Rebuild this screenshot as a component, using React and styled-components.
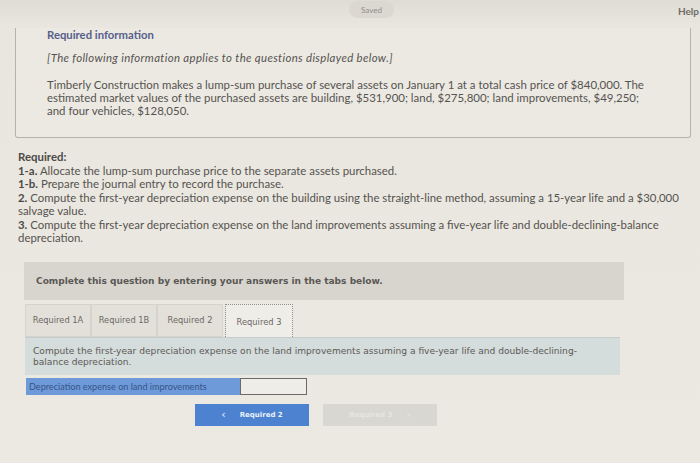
import React from 'react';
import styled, { createGlobalStyle } from 'styled-components';

const Global = createGlobalStyle`
  html, body { margin: 0; padding: 0; }
  body {
    background: #ebe8e1;
    font-family: Lato, "Open Sans", sans-serif;
    color: #4a4845;
    width: 700px;
    height: 463px;
    overflow: hidden;
  }
`;

const Page = styled.div`
  width: 700px;
  height: 463px;
  background: linear-gradient(#dfdcd5 0, #e9e6df 26px, #ece9e3 100%);
`;

const TopBar = styled.div`
  height: 28px;
  display: flex;
  justify-content: center;
  align-items: flex-start;
  position: relative;
`;

const SavedPill = styled.span`
  margin-left: 43px;
  margin-top: 1px;
  width: 45px;
  height: 17px;
  border-radius: 9px;
  background: #dbd8d1;
  color: #8f8d88;
  font-size: 8px;
  display: flex;
  align-items: center;
  justify-content: center;
`;

const Help = styled.span`
  position: absolute;
  right: 1px;
  top: 5px;
  font-size: 10px;
  font-weight: 700;
  color: #6e6c68;
`;

const InfoBox = styled.div`
  margin: 0 9px 0 15px;
  height: 110px;
  box-sizing: border-box;
  border: 1px solid #b5b2ac;
  border-top: none;
  border-radius: 0 0 3px 3px;
  padding: 0 0 0 31px;
  background: #ece9e3;
`;

const InfoTitle = styled.div`
  font-size: 11.3px;
  line-height: 14px;
  font-weight: 700;
  color: #56608a;
`;

const InfoNote = styled.div`
  margin-top: 9px;
  font-size: 11.4px;
  line-height: 14px;
  letter-spacing: 0.35px;
  font-style: italic;
  color: #55534f;
`;

const InfoText = styled.p`
  margin: 13px 0 0;
  font-size: 11.45px;
  line-height: 13px;
  white-space: nowrap;
  color: #55534f;
`;

const Required = styled.div`
  margin: 12px 0 0 18px;
  font-size: 11.4px;
  line-height: 13.5px;
  white-space: nowrap;
  color: #55534f;
  b { color: #4b4a47; }
`;

const Assignment = styled.div`
  margin: 17px 0 0 24px;
  width: 600px;
`;

const Banner = styled.div`
  height: 38px;
  background: #d8d5ce;
  display: flex;
  align-items: center;
  padding-left: 12px;
  font-family: "DejaVu Sans", sans-serif;
  font-size: 9.05px;
  font-weight: 700;
  color: #5a5855;
`;

const Tabs = styled.div`
  display: flex;
  margin: 4px 0 0 1px;
  height: 33px;
  align-items: flex-end;
`;

const Tab = styled.div`
  width: ${p => (p.$active ? '68px' : '66px')};
  height: 33px;
  box-sizing: border-box;
  display: flex;
  align-items: center;
  justify-content: center;
  font-family: "DejaVu Sans", sans-serif;
  font-size: 8.3px;
  color: #6a6864;
  background: ${p => (p.$active ? '#efede8' : '#e3e0d9')};
  border: ${p => (p.$active ? '1px dotted #8f8d89' : '1px solid #d6d3cc')};
  border-bottom: ${p => (p.$active ? 'none' : '1px solid #d6d3cc')};
  margin-left: ${p => (p.$active ? '2px' : '0')};
  padding-top: ${p => (p.$active ? '3px' : '0')};
`;

const Prompt = styled.div`
  height: 38px;
  width: 595px;
  margin-left: 1px;
  box-sizing: border-box;
  background: #d4dcdc;
  border-top: 1px solid #c4cdce;
  padding: 8px 0 0 8px;
  font-family: "DejaVu Sans", sans-serif;
  font-size: 9.1px;
  line-height: 11.5px;
  color: #5c5a56;
`;

const AnswerRow = styled.div`
  display: flex;
  margin: 3px 0 0 2px;
  height: 17px;
`;

const AnswerLabel = styled.div`
  width: 214px;
  background: #6f9ad9;
  color: #36558a;
  font-size: 9.1px;
  display: flex;
  align-items: center;
  padding-left: 3px;
  box-sizing: border-box;
`;

const AnswerInput = styled.div`
  width: 67px;
  box-sizing: border-box;
  border: 1px solid #6c6a66;
  background: #efede8;
`;

const Nav = styled.div`
  display: flex;
  gap: 14px;
  margin: 9px 0 0 171px;
`;

const NavButton = styled.div`
  width: 114px;
  height: 22px;
  display: flex;
  align-items: center;
  justify-content: center;
  gap: 14px;
  font-family: "DejaVu Sans", sans-serif;
  font-size: 7px;
  font-weight: 700;
  color: ${p => (p.$disabled ? '#e8e6e1' : '#eef2fa')};
  background: ${p => (p.$disabled ? '#d9d7d2' : '#4c82d0')};
  span { font-size: 11px; font-weight: 400; line-height: 1; }
`;

export default function App() {
  return (
    <>
      <Global />
      <Page>
        <TopBar>
          <SavedPill>Saved</SavedPill>
          <Help>Help</Help>
        </TopBar>
        <InfoBox>
          <InfoTitle>Required information</InfoTitle>
          <InfoNote>[The following information applies to the questions displayed below.]</InfoNote>
          <InfoText>
            Timberly Construction makes a lump-sum purchase of several assets on January 1 at a total cash price of $840,000. The
            <br />
            estimated market values of the purchased assets are building, $531,900; land, $275,800; land improvements, $49,250;
            <br />
            and four vehicles, $128,050.
          </InfoText>
        </InfoBox>
        <Required>
          <b>Required:</b>
          <br />
          <b>1-a.</b> Allocate the lump-sum purchase price to the separate assets purchased.
          <br />
          <b>1-b.</b> Prepare the journal entry to record the purchase.
          <br />
          <b>2.</b> Compute the first-year depreciation expense on the building using the straight-line method, assuming a 15-year life and a $30,000
          <br />
          salvage value.
          <br />
          <b>3.</b> Compute the first-year depreciation expense on the land improvements assuming a five-year life and double-declining-balance
          <br />
          depreciation.
        </Required>
        <Assignment>
          <Banner>Complete this question by entering your answers in the tabs below.</Banner>
          <Tabs>
            <Tab>Required 1A</Tab>
            <Tab>Required 1B</Tab>
            <Tab>Required 2</Tab>
            <Tab $active>Required 3</Tab>
          </Tabs>
          <Prompt>
            Compute the first-year depreciation expense on the land improvements assuming a five-year life and double-declining-
            <br />
            balance depreciation.
          </Prompt>
          <AnswerRow>
            <AnswerLabel>Depreciation expense on land improvements</AnswerLabel>
            <AnswerInput />
          </AnswerRow>
          <Nav>
            <NavButton>
              <span>‹</span> Required 2
            </NavButton>
            <NavButton $disabled>
              Required 3 <span>›</span>
            </NavButton>
          </Nav>
        </Assignment>
      </Page>
    </>
  );
}
